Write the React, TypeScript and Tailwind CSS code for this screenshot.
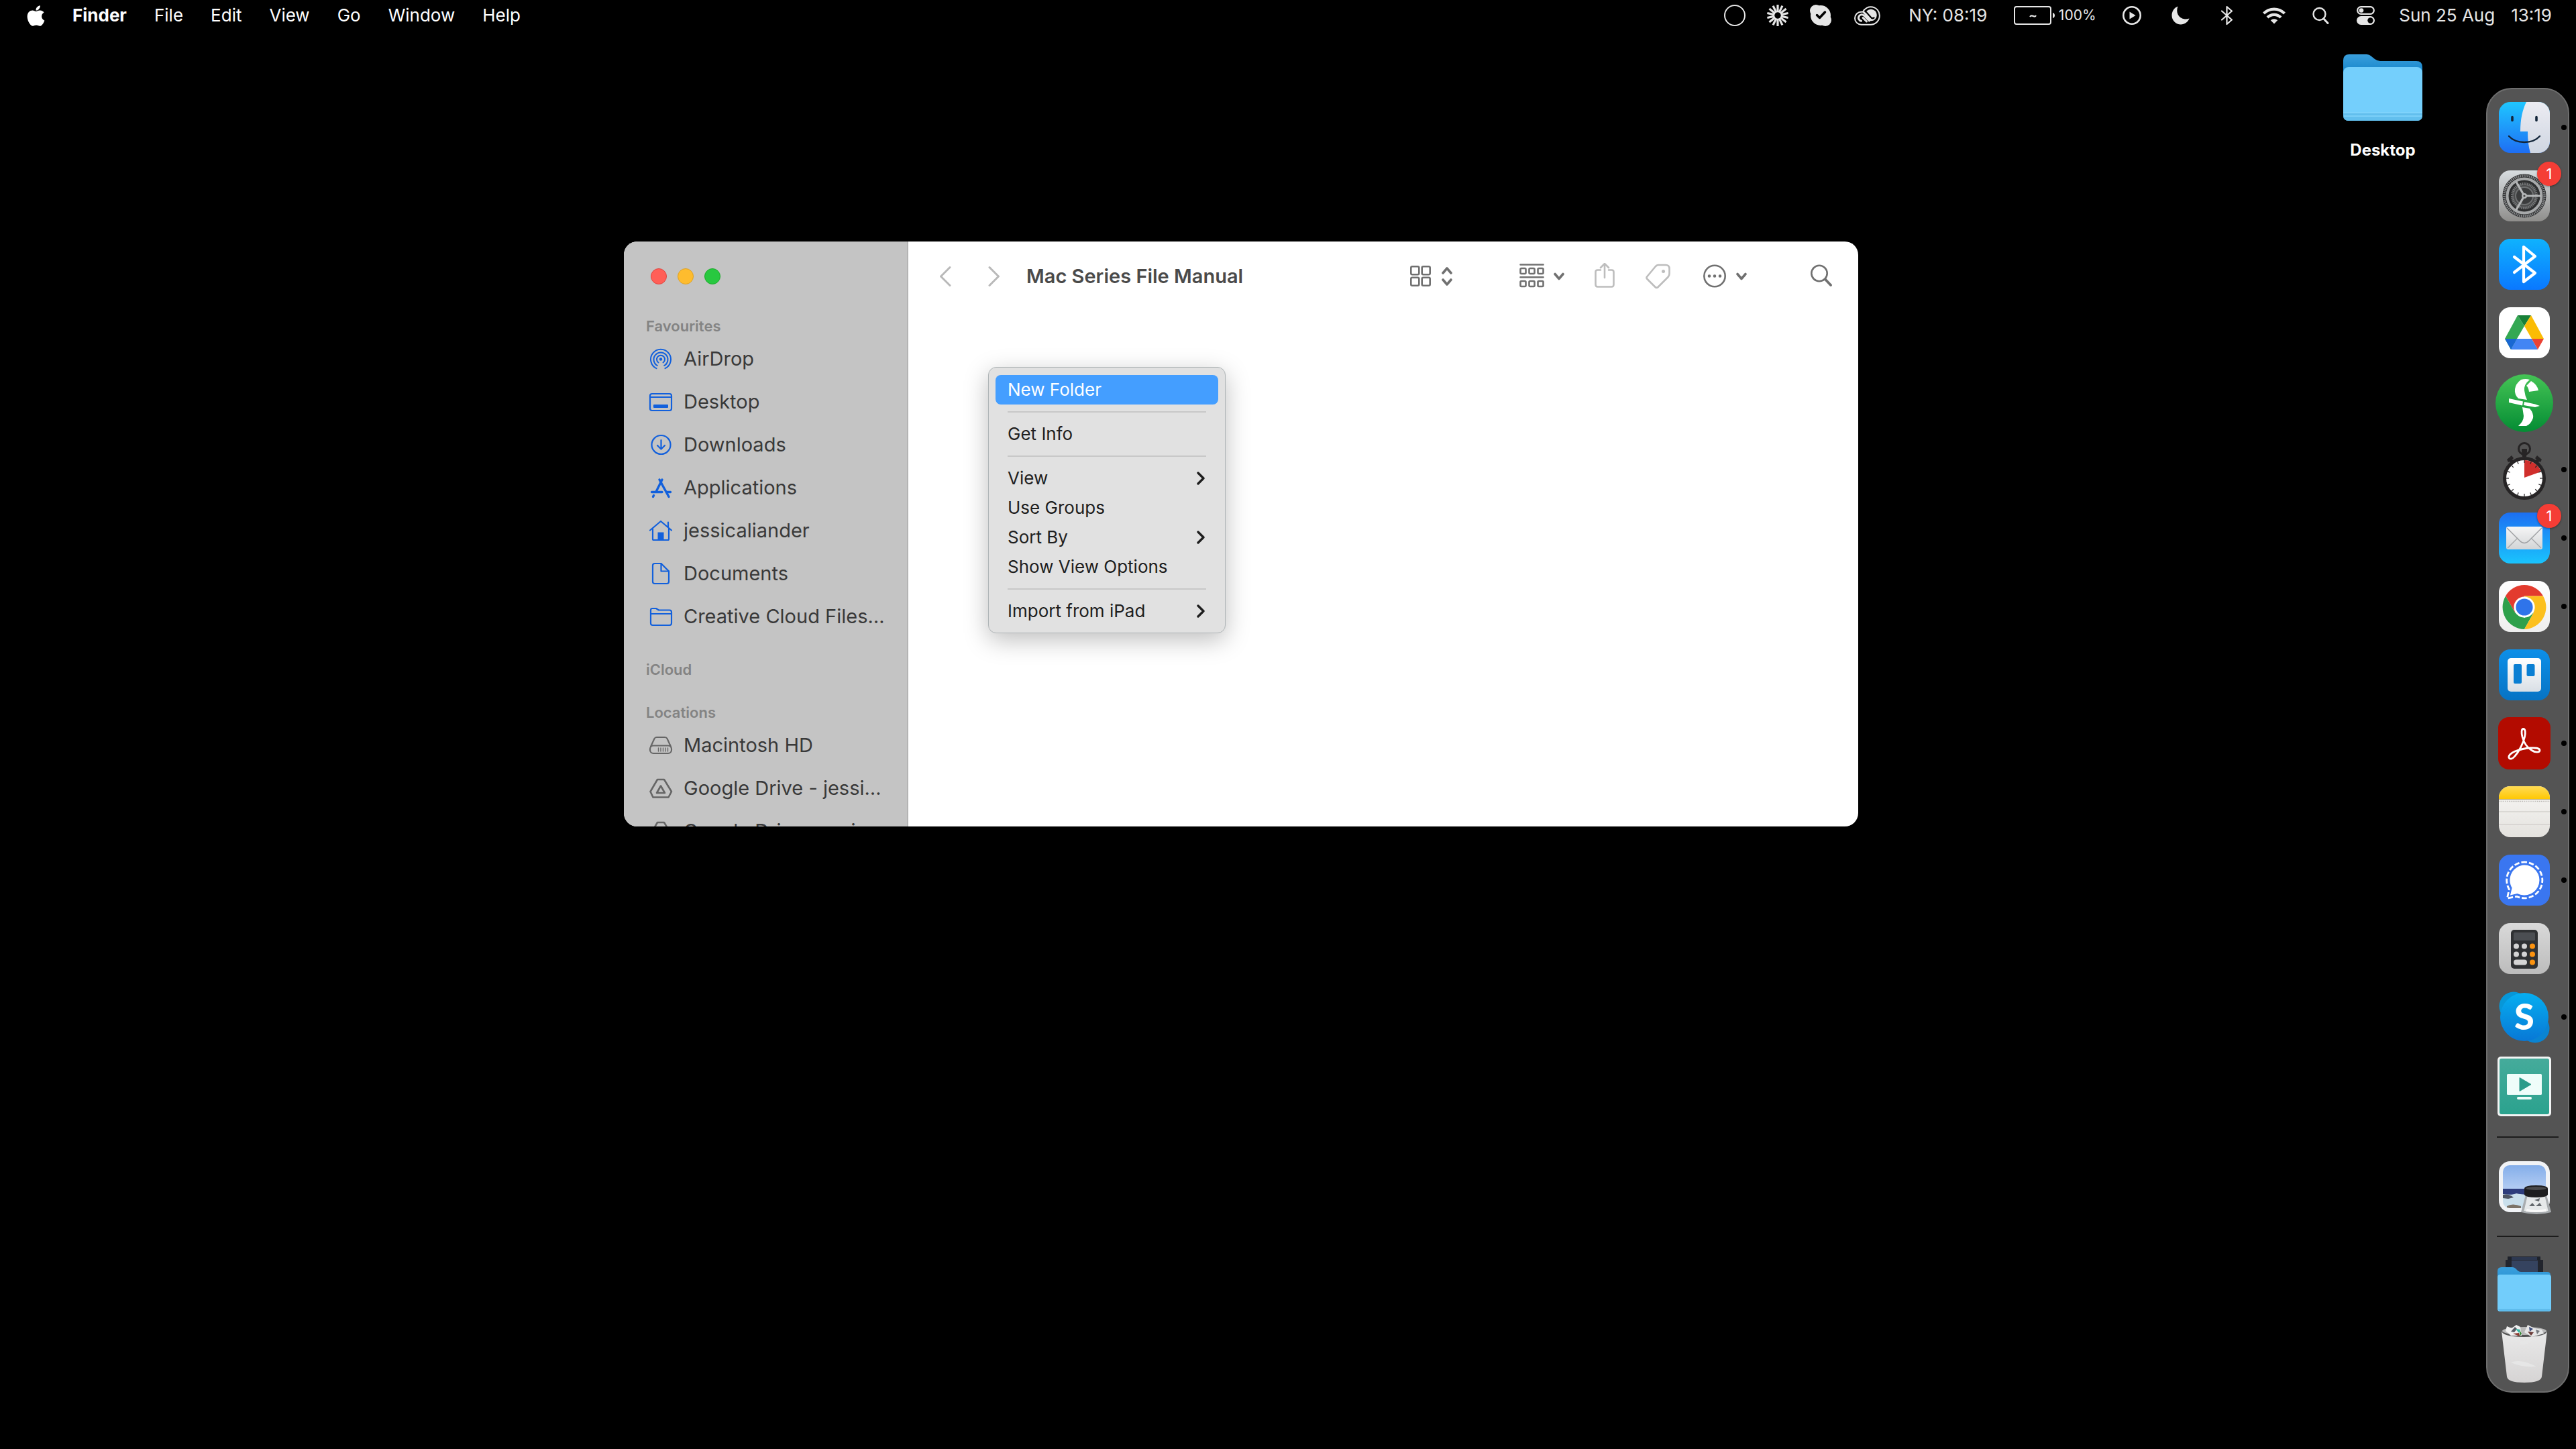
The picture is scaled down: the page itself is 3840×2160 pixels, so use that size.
import type { ReactNode } from "react";
import { FaApple } from "react-icons/fa";

/* ---------- Menu bar ---------- */

const menus = ["File", "Edit", "View", "Go", "Window", "Help"];

function StatusButton({ label, className, children }: { label: string; className: string; children: ReactNode }) {
  return (
    <button type="button" aria-label={label} className={`flex shrink-0 items-center ${className}`}>
      {children}
    </button>
  );
}

function MenuBar() {
  const rays = Array.from({ length: 14 }, (_, i) => (i * 360) / 14);
  return (
    <header className="flex h-[46px] shrink-0 items-center justify-between pl-[40px] pr-[36px] text-[26px] leading-[32px] text-white">
      <nav className="flex items-center gap-[41px]">
        <button type="button" aria-label="Apple menu">
          <FaApple className="h-[35px] w-[27px]" />
        </button>
        <button type="button" className="font-bold">Finder</button>
        {menus.map((m) => (
          <button type="button" key={m}>{m}</button>
        ))}
      </nav>
      <div className="flex items-center text-[#e6e6e6]">
        <StatusButton label="Recorder" className="">
          <svg width="32" height="32" viewBox="0 0 32 32" fill="none" stroke="currentColor" strokeWidth="2"><circle cx="16" cy="16" r="15" /></svg>
        </StatusButton>
        <StatusButton label="Loader" className="ml-[32px]">
          <svg width="32" height="32" viewBox="0 0 32 32" stroke="currentColor">
            {rays.map((a) => (
              <line key={a} x1="16" y1="0" x2="16" y2="11" strokeWidth="3.200" transform={`rotate(${a} 16 16)`} />
            ))}
            <circle cx="16" cy="16" r="5.800" fill="none" strokeWidth="2" />
          </svg>
        </StatusButton>
        <StatusButton label="Skype" className="ml-[32px]">
          <svg width="32" height="32" viewBox="0 0 32 32">
            <g fill="currentColor"><circle cx="9" cy="9" r="9" /><circle cx="23" cy="23" r="9" /><circle cx="16" cy="16" r="15" /></g>
            <path d="M10.500 15.500l4 4 8-8.500" fill="none" stroke="#000" strokeWidth="3.500" strokeLinecap="round" strokeLinejoin="round" />
          </svg>
        </StatusButton>
        <StatusButton label="Creative Cloud" className="ml-[34px]">
          <svg width="39" height="30" viewBox="0 0 39 30" fill="none" stroke="currentColor">
            <path d="M10.500 28.700a9.300 9.300 0 0 1 0-19h2.500A13 13 0 0 1 37.800 15 13.300 13.300 0 0 1 25 28.700z" strokeWidth="2" />
            <circle cx="25" cy="14.500" r="8.800" fill="currentColor" stroke="none" />
            <path d="M18.500 24L13 18.500M10.500 23.300a4.800 4.800 0 1 1 4-8.300l8 8" strokeWidth="3" strokeLinecap="round" />
            <path d="M17 9l8.500 9.500q2 1.500 4 0" stroke="#000" strokeWidth="2.200" strokeLinecap="round" />
            <path d="M14.500 10.500l9.500 10.500" strokeWidth="3" strokeLinecap="round" />
          </svg>
        </StatusButton>
        <span className="ml-[42px] w-[122px] whitespace-nowrap">NY: 08:19</span>
        <StatusButton label="Battery" className="ml-[35px] gap-1">
          <svg width="62" height="28" viewBox="0 0 62 28" fill="none" stroke="currentColor" strokeWidth="2">
            <rect x="1" y="1" width="54" height="26" rx="3" />
            <path d="M24 16c1.500-2.500 3-2 5-1s3 1 4-1" />
            <path d="M58 10c4 1 4 7 0 8z" fill="currentColor" stroke="none" />
          </svg>
          <span className="w-[57px] whitespace-nowrap text-[21px] leading-[28px]">100%</span>
        </StatusButton>
        <StatusButton label="Now playing" className="ml-[39px]">
          <svg width="28" height="28" viewBox="0 0 28 28"><circle cx="14" cy="14" r="12.700" fill="none" stroke="currentColor" strokeWidth="2.600" /><path d="M10.500 8.500v11l9-5.500z" fill="currentColor" /></svg>
        </StatusButton>
        <StatusButton label="Focus" className="ml-[45px]">
          <svg width="27" height="28" viewBox="0 0 27 28" fill="currentColor"><path d="M9.500.5C6 9 10 18.500 20 19.500c2.500.2 4.500-.2 6.500-1C24.500 24 19.500 27.500 14 27.500 6.500 27.500.5 21.500.5 14 .5 8 4 2.500 9.500.5z" /></svg>
        </StatusButton>
        <StatusButton label="Bluetooth" className="ml-[46px]">
          <svg width="19" height="30" viewBox="0 0 19 30" fill="none" stroke="currentColor" strokeWidth="2.200" strokeLinejoin="round" strokeLinecap="round"><path d="M2 8.500l15 13-7.500 6.500V2L17 8.500 2 21.500" /></svg>
        </StatusButton>
        <StatusButton label="Wi-Fi" className="ml-[44px]">
          <svg width="34" height="26" viewBox="0 0 34 26" fill="none" stroke="currentColor" strokeWidth="4.200">
            <path d="M1.500 10a22 22 0 0 1 31 0" /><path d="M7 16a14.200 14.200 0 0 1 20 0" />
            <path d="M17 25.500l-5.200-5.200a7.400 7.400 0 0 1 10.400 0z" fill="currentColor" stroke="none" />
          </svg>
        </StatusButton>
        <StatusButton label="Search" className="ml-[40px]">
          <svg width="25" height="26" viewBox="0 0 25 26" fill="none" stroke="currentColor" strokeWidth="2.400" strokeLinecap="round"><circle cx="10.500" cy="11" r="9" /><path d="M17 18l6 6.500" strokeWidth="3" /></svg>
        </StatusButton>
        <StatusButton label="Control Centre" className="ml-[41px]">
          <svg width="27" height="28" viewBox="0 0 27 28">
            <rect x="1.200" y="1.200" width="24.600" height="10.600" rx="5.300" fill="none" stroke="currentColor" strokeWidth="2.200" />
            <circle cx="7" cy="6.500" r="3.300" fill="currentColor" />
            <rect x="0" y="15" width="27" height="13" rx="6.500" fill="currentColor" />
            <circle cx="20.500" cy="21.500" r="4.200" fill="#000" />
          </svg>
        </StatusButton>
        <button type="button" className="ml-[36px] flex gap-[24px] whitespace-nowrap">
          <span>Sun 25 Aug</span>
          <span>13:19</span>
        </button>
      </div>
    </header>
  );
}

/* ---------- Finder sidebar ---------- */

type Item = { name: string; icon: ReactNode };

const driveOutline = (
  <g strokeWidth="2.600">
    <path d="M13 5h10l11 18-4.500 8.500h-23L2.500 23z" />
    <path d="M18 14.500L24 25H12z" />
  </g>
);

const favourites: Item[] = [
  {
    name: "AirDrop",
    icon: (
      <g strokeWidth="2">
        <circle cx="18" cy="18.500" r="2.200" fill="currentColor" stroke="none" />
        <path d="M14.500 23.500a6 6 0 1 1 7 0" />
        <path d="M12.800 28a10.500 10.500 0 1 1 10.400 0" />
        <path d="M11.500 32.200a15 15 0 1 1 13 0" />
      </g>
    ),
  },
  {
    name: "Desktop",
    icon: (
      <g>
        <rect x="2" y="6" width="32" height="25" rx="3" />
        <path d="M2 11h32" />
        <rect x="7" y="22" width="22" height="5" rx="1" fill="currentColor" stroke="none" />
      </g>
    ),
  },
  { name: "Downloads", icon: <g><circle cx="18.500" cy="18" r="14" /><path d="M18.500 11v13M13 19l5.500 5.500L24 19" /></g> },
  {
    name: "Applications",
    icon: (
      <g strokeWidth="3.400">
        <path d="M20 6l-8.500 17M16 6l14 25.500M4.500 24.500H20M26 24.500h6.500M7.500 29.500L6.500 31.500" />
      </g>
    ),
  },
  {
    name: "jessicaliander",
    icon: (
      <g>
        <path d="M2 17.500L18 4l16 13.500M29 13V5.500" />
        <path d="M6 15v15.500q0 1.500 1.500 1.500h21q1.500 0 1.500-1.500V15" />
        <rect x="13.500" y="20.500" width="9" height="12" fill="currentColor" stroke="none" />
      </g>
    ),
  },
  { name: "Documents", icon: <g><path d="M9 3h9.500L30 14.500V30q0 3-3 3H9q-3 0-3-3V6q0-3 3-3z" /><path d="M18.500 3v11.500H30" /></g> },
  { name: "Creative Cloud Files…", icon: <g><path d="M3 27V8.500Q3 6 5.500 6H11l4 2.500h16q3 0 3 3V28q0 3-3 3H6q-3 0-3-3z" /><path d="M3 14h31" /></g> },
];

const locations: Item[] = [
  {
    name: "Macintosh HD",
    icon: (
      <g>
        <path d="M3 20L8.500 8Q9.500 6 12 6h12q2.500 0 3.500 2L33 20" />
        <rect x="2" y="18.500" width="32" height="11.500" rx="5" />
        <path d="M14.500 22v5M18 22v5M21.500 22v5M25 22v5M28.500 22v5" strokeWidth="1.400" />
      </g>
    ),
  },
  { name: "Google Drive - jessi…", icon: driveOutline },
  { name: "Google Drive - mai…", icon: driveOutline },
];

function Section({ title, items, tone }: { title: string; items: Item[]; tone: string }) {
  return (
    <section>
      <h2 className="pl-[33px] text-[22px] font-semibold leading-[34px] text-[#838383]">{title}</h2>
      <ul>
        {items.map((it) => (
          <li key={it.name}>
            <button type="button" className="flex h-[64px] w-full items-center gap-4 pl-[37px]">
              <svg width="36" height="36" viewBox="0 0 36 36" fill="none" stroke="currentColor" strokeWidth="2.200" strokeLinecap="round" strokeLinejoin="round" className={`shrink-0 ${tone}`}>
                {it.icon}
              </svg>
              <span className="whitespace-nowrap">{it.name}</span>
            </button>
          </li>
        ))}
      </ul>
    </section>
  );
}

function Sidebar() {
  return (
    <aside className="flex w-[424px] shrink-0 flex-col overflow-hidden border-r-2 border-[#b4b4b4] bg-[#c4c4c4] text-[29px] leading-[40px] text-[#393939]">
      <div className="flex h-[104px] shrink-0 items-center gap-4 pl-[40px]">
        <button type="button" aria-label="Close" className="size-6 rounded-full border border-[#e0443e] bg-[#ff5f57]" />
        <button type="button" aria-label="Minimise" className="size-6 rounded-full border border-[#dea123] bg-[#febc2e]" />
        <button type="button" aria-label="Zoom" className="size-6 rounded-full border border-[#1aab29] bg-[#28c840]" />
      </div>
      <div className="flex min-h-0 flex-1 flex-col gap-[30px] pt-[5px]">
        <Section title="Favourites" items={favourites} tone="text-[#1260dc]" />
        <Section title="iCloud" items={[]} tone="text-[#1260dc]" />
        <Section title="Locations" items={locations} tone="text-[#666666]" />
      </div>
    </aside>
  );
}

/* ---------- Finder toolbar ---------- */

function Glyph({ w, children, className = "", sw = 2.6 }: { w: number; children: ReactNode; className?: string; sw?: number }) {
  return (
    <svg width={w} height="40" viewBox={`0 0 ${w} 40`} fill="none" stroke="currentColor" strokeWidth={sw} strokeLinecap="round" strokeLinejoin="round" className={className}>
      {children}
    </svg>
  );
}

function DownChevron() {
  return <Glyph w={16} sw={3.6}><path d="M2 16.500l6 7 6-7" /></Glyph>;
}

function Toolbar() {
  return (
    <div className="flex h-[104px] shrink-0 items-center justify-between pl-[46px] pr-[39px] text-[#707070]">
      <div className="flex items-center">
        <button type="button" aria-label="Back" className="text-[#b9b9b9]"><Glyph w={18} sw={3}><path d="M16 6.500L2.500 20 16 33.500" /></Glyph></button>
        <button type="button" aria-label="Forward" className="ml-[55px] text-[#b9b9b9]"><Glyph w={18} sw={3}><path d="M2 6.500L15.500 20 2 33.500" /></Glyph></button>
        <h1 className="ml-[39px] text-[29px] font-semibold leading-[40px] text-[#4a4a4a]">Mac Series File Manual</h1>
      </div>
      <div className="flex items-center">
        <button type="button" aria-label="View as icons" className="flex gap-4">
          <Glyph w={31}>
            <rect x="1.300" y="5.300" width="12" height="12" rx="2" /><rect x="17.700" y="5.300" width="12" height="12" rx="2" />
            <rect x="1.300" y="21.700" width="12" height="12" rx="2" /><rect x="17.700" y="21.700" width="12" height="12" rx="2" />
          </Glyph>
          <Glyph w={16} sw={3.6}><path d="M2 15l6-7 6 7M2 25l6 7 6-7" /></Glyph>
        </button>
        <button type="button" aria-label="Group items" className="ml-[100px] flex gap-[14px]">
          <Glyph w={37}>
            <path d="M1.500 2.500h34M1.500 21.300h34" />
            <rect x="1.500" y="8" width="8" height="8" rx="1.500" /><rect x="14.500" y="8" width="8" height="8" rx="1.500" /><rect x="27.500" y="8" width="8" height="8" rx="1.500" />
            <rect x="1.500" y="27" width="8" height="8" rx="1.500" /><rect x="14.500" y="27" width="8" height="8" rx="1.500" /><rect x="27.500" y="27" width="8" height="8" rx="1.500" />
          </Glyph>
          <DownChevron />
        </button>
        <button type="button" aria-label="Share" className="ml-[45px] text-[#bdbdbd]">
          <Glyph w={30}><path d="M9 10.500H4.500q-3 0-3 3V32q0 3.500 3 3.500h21q3 0 3-3.500V13.500q0-3-3-3H21M15 22V1M9 7l6-6 6 6" /></Glyph>
        </button>
        <button type="button" aria-label="Tags" className="ml-[46px] text-[#bdbdbd]">
          <Glyph w={37}><path d="M19 3h11q5.500 0 5.500 5.500v7.500q0 3-2 5L18.500 36q-2 2-4.500-.5L2.500 24q-2-2 0-4L15 5q2-2 4-2z" /><circle cx="26.500" cy="12.500" r="2.500" fill="currentColor" stroke="none" /></Glyph>
        </button>
        <button type="button" aria-label="More actions" className="ml-[49px] flex gap-[15px]">
          <Glyph w={34}>
            <circle cx="17" cy="19.500" r="15.700" />
            <g fill="currentColor" stroke="none"><circle cx="9" cy="19.500" r="2.300" /><circle cx="17" cy="19.500" r="2.300" /><circle cx="25" cy="19.500" r="2.300" /></g>
          </Glyph>
          <DownChevron />
        </button>
        <button type="button" aria-label="Search" className="ml-[95px]">
          <Glyph w={32}><circle cx="13" cy="15.500" r="11.700" /><path d="M22 24.500l8 8.500" strokeWidth="3.800" /></Glyph>
        </button>
      </div>
    </div>
  );
}

/* ---------- Context menu ---------- */

type Entry = { label: string; sub?: boolean; active?: boolean };
const groups: Entry[][] = [
  [{ label: "New Folder", active: true }],
  [{ label: "Get Info" }],
  [{ label: "View", sub: true }, { label: "Use Groups" }, { label: "Sort By", sub: true }, { label: "Show View Options" }],
  [{ label: "Import from iPad", sub: true }],
];

function ContextMenu() {
  return (
    <div role="menu" className="absolute left-[543px] top-[187px] w-[354px] rounded-[12px] border border-[#aeb4b6] bg-[#e1e1e1] px-[10px] pb-[10px] pt-[11px] text-[26px] leading-[32px] text-[#1e1e1e] shadow-[0_10px_36px_rgba(0,0,0,0.26)]">
      {groups.map((g, i) => (
        <div key={g[0].label} role="group">
          {i > 0 && <hr className="mx-[18px] my-[10px] border-t-2 border-[#c8c8c8]" />}
          {g.map((e) => (
            <button
              type="button"
              role="menuitem"
              key={e.label}
              className={`flex h-[44px] w-full items-center justify-between rounded-[8px] pl-[18px] pr-[20px] ${e.active ? "bg-[#449eff] text-white" : ""}`}
            >
              <span>{e.label}</span>
              {e.sub && (
                <svg width="12" height="20" viewBox="0 0 12 20" fill="none" stroke="currentColor" strokeWidth="3.400" strokeLinecap="round" strokeLinejoin="round"><path d="M2 2l8 8-8 8" /></svg>
              )}
            </button>
          ))}
        </div>
      ))}
    </div>
  );
}

/* ---------- Dock ---------- */

function Tile({ fill }: { fill: string }) {
  return <rect x="12" y="12" width="76" height="76" rx="17" fill={fill} />;
}

function Gradients() {
  const defs: [string, string, string][] = [
    ["gFinder", "#1fc6ff", "#1e6ef4"],
    ["gFace", "#ececf2", "#cfd6e2"],
    ["gSettings", "#d8dde0", "#8f8e8c"],
    ["gBlue", "#0fb2fe", "#0a78ff"],
    ["gGreen", "#45c455", "#048c34"],
    ["gMail", "#1d6ff2", "#1ac4fd"],
    ["gEnvelope", "#f6f6f6", "#d2d4d6"],
    ["gChrome", "#ffffff", "#eeeeee"],
    ["gTrello", "#0d8fe8", "#0673c4"],
    ["gBoard", "#ffffff", "#d9dfe5"],
    ["gYellow", "#ffdb56", "#ffc803"],
    ["gPaper", "#f8f7f5", "#e4e2de"],
    ["gCalc", "#d9d9d9", "#bcbcbc"],
    ["gSkype", "#06aef0", "#0878d6"],
    ["gTeal", "#45ab9b", "#2ba28e"],
    ["gSky", "#84aeea", "#b4cdf3"],
    ["gBack", "#3a9fdc", "#067ac4"],
    ["gBin", "#e9e9e9", "#d6d4d4"],
  ];
  return (
    <svg width="0" height="0" className="absolute" aria-hidden="true">
      <defs>
        {defs.map(([id, a, b]) => (
          <linearGradient key={id} id={id} x1="0" y1="0" x2="0" y2="1">
            <stop offset="0" stopColor={a} /><stop offset="1" stopColor={b} />
          </linearGradient>
        ))}
        <clipPath id="cTile"><rect x="12" y="12" width="76" height="76" rx="17" /></clipPath>
        <clipPath id="cPhoto"><rect x="18" y="16" width="64" height="64" rx="10" /></clipPath>
      </defs>
    </svg>
  );
}

type DockApp = { name: string; art: ReactNode; open?: boolean; badge?: string };

const ticks = Array.from({ length: 16 }, (_, i) => (i * 360) / 16);

const apps: DockApp[] = [
  {
    name: "Finder", open: true,
    art: (
      <g>
        <Tile fill="url(#gFinder)" />
        <path clipPath="url(#cTile)" d="M53 12C47 24 44 38 44 56h11c0 12 1 22 4 32h31V12z" fill="url(#gFace)" />
        <path d="M32 34.500v5M68 34.500v5" stroke="#13263a" strokeWidth="3.600" strokeLinecap="round" />
        <path d="M27 63c11 12 35 12 46 0" fill="none" stroke="#13263a" strokeWidth="2.400" strokeLinecap="round" />
      </g>
    ),
  },
  {
    name: "System Settings", badge: "1",
    art: (
      <g>
        <Tile fill="url(#gSettings)" />
        <circle cx="50" cy="50" r="32.500" fill="#2e2f30" />
        <circle cx="50" cy="50" r="30" fill="none" stroke="#8a8c8e" strokeWidth="3.500" strokeDasharray="1.600 1.200" />
        <circle cx="50" cy="50" r="25.500" fill="none" stroke="#a7a9aa" strokeWidth="4" />
        <circle cx="50" cy="50" r="18" fill="#4c4d4e" stroke="#77797a" strokeWidth="4" strokeDasharray="1.600 1" />
        <circle cx="50" cy="50" r="13" fill="#3b3c3d" stroke="#6f7172" strokeWidth="2" />
        <path d="M50 50h25M50 50L37.500 28.500M50 50L37.500 71.500" stroke="#b4b6b7" strokeWidth="3.200" />
        <circle cx="50" cy="50" r="4" fill="#b4b6b7" /><circle cx="50" cy="50" r="1.600" fill="#444" />
      </g>
    ),
  },
  {
    name: "Bluetooth File Exchange",
    art: <g><Tile fill="url(#gBlue)" /><path d="M35 39l31 24-17 13V24l17 14-31 24" fill="none" stroke="#fff" strokeWidth="4.200" strokeLinecap="round" strokeLinejoin="round" /></g>,
  },
  {
    name: "Google Drive",
    art: (
      <g>
        <Tile fill="#fff" />
        <path d="M40 24L50 40 39 59 30 75 21 59z" fill="#34a853" />
        <path d="M40 24h20L50 40z" fill="#188038" />
        <path d="M60 24l19 35H61L50 40z" fill="#fbbc04" />
        <path d="M39 59h22l9 16H30z" fill="#4285f4" />
        <path d="M21 59h18l-9 16z" fill="#1967d2" />
        <path d="M61 59h18l-9 16z" fill="#ea4335" />
      </g>
    ),
  },
  {
    name: "Final Draft",
    art: (
      <g>
        <circle cx="50" cy="53" r="43" fill="url(#gGreen)" />
        <g fill="#fff">
          <path d="M45 18q7-2 13 0-9 7-8 16 1 8 4 14l-13-2q-6-6-5-14 1-8 9-14z" />
          <path d="M60 20q9 5 11 14l-14 2q-1-7-4-9z" />
          <path d="M27 46l21 4.500-1 6-20-4.500zM50 51l16 3.500 7 2.500-7 2-17-3z" />
          <path d="M47 59l11 2q6 7 5 14-3 9-10 12H41q8-7 8-15-1-7-2-13z" />
        </g>
      </g>
    ),
  },
  {
    name: "Timer", open: true,
    art: (
      <g>
        <circle cx="50" cy="19" r="8.500" fill="none" stroke="#262425" strokeWidth="3" />
        <path d="M46 19h8v4l-1 8h-6l-1-8z" fill="#262425" />
        <path d="M24 35l7-6 3 4-2 2 5 6-4 3-5-6-2 1zM76 35l-7-6-3 4 2 2-5 6 4 3 5-6 2 1z" fill="#262425" />
        <circle cx="50" cy="63" r="29.500" fill="#fff" stroke="#262425" strokeWidth="5" />
        <path d="M50 62V36a27 27 0 0 1 25 17z" fill="#d02f2c" />
        {ticks.map((a) => (
          <path key={a} d="M50 36v4" stroke="#262425" strokeWidth="1.200" transform={`rotate(${a} 50 63)`} />
        ))}
      </g>
    ),
  },
  {
    name: "Mail", open: true, badge: "1",
    art: (
      <g>
        <Tile fill="url(#gMail)" />
        <rect x="23" y="33" width="54" height="34" rx="3" fill="url(#gEnvelope)" />
        <path d="M25 65l15-15M75 65L60 50" stroke="#a3a5a7" strokeWidth="1.200" />
        <path d="M24 35l19 19q7 7 14 0l19-19" fill="none" stroke="#9b9da0" strokeWidth="1.400" />
      </g>
    ),
  },
  {
    name: "Google Chrome", open: true,
    art: (
      <g>
        <Tile fill="url(#gChrome)" />
        <path d="M50 18a33 33 0 0 1 28 16.500H50L36 59 22 34.500A33 33 0 0 1 50 18z" fill="#e33b2e" />
        <path d="M22 34.500L36 59 50 67 64 59 50 84A33 33 0 0 1 22 34.500z" fill="#2da04b" />
        <path d="M78 34.500A33 33 0 0 1 50 84l14-25-14-8V34.500z" fill="#fcc01e" />
        <circle cx="50" cy="51" r="15.600" fill="#fff" />
        <circle cx="50" cy="51" r="12.600" fill="#2f74ea" />
      </g>
    ),
  },
  {
    name: "Trello",
    art: (
      <g>
        <Tile fill="url(#gTrello)" />
        <rect x="25" y="25" width="50" height="50" rx="5" fill="url(#gBoard)" />
        <rect x="34" y="34" width="12" height="29" rx="2" fill="#0a7fd3" />
        <rect x="53.500" y="34" width="12" height="18" rx="2" fill="#0a7fd3" />
      </g>
    ),
  },
  {
    name: "Adobe Acrobat", open: true,
    art: (
      <g>
        <rect x="11" y="11" width="78" height="78" rx="16" fill="#b30b00" />
        <path d="M36 69c-4 5-8 5-9 2.500-1-3 3-7 9-9.500 7-2.500 14-4.500 22-5 8-.5 15 0 15 3.500s-7 3.500-12 0c-7-4-11.500-11-14-20-1.500-6-1.500-12 1.500-12s3.500 6 2 12c-2 9-8 21-14.500 28.500z" fill="none" stroke="#fff" strokeWidth="2.800" strokeLinejoin="round" />
      </g>
    ),
  },
  {
    name: "Notes", open: true,
    art: (
      <g clipPath="url(#cTile)">
        <rect x="12" y="12" width="76" height="76" fill="url(#gPaper)" />
        <rect x="12" y="12" width="76" height="19" fill="url(#gYellow)" />
        <path d="M12 31.500h76" stroke="#b9a97a" strokeWidth="1" />
        <path d="M13 34.500h75" stroke="#b5b3af" strokeWidth="1.600" strokeDasharray="1.400 1.400" />
        <path d="M12 50h76M12 69h76" stroke="#d3d1cd" strokeWidth="1.600" />
      </g>
    ),
  },
  {
    name: "Signal", open: true,
    art: (
      <g>
        <Tile fill="#3a76f0" />
        <path d="M50 27.500a22.500 22.500 0 1 1-10.500 42.400L29 72.500l2.600-11A22.500 22.500 0 0 1 50 27.500z" fill="#fff" />
        <path d="M50 23.200a26.800 26.800 0 1 1-11 51.200L24.500 77l2.800-13.500A26.800 26.800 0 0 1 50 23.200z" fill="none" stroke="#fff" strokeWidth="2.800" strokeDasharray="7.500 3" strokeDashoffset="3.500" />
      </g>
    ),
  },
  {
    name: "Calculator",
    art: (
      <g>
        <Tile fill="url(#gCalc)" />
        <rect x="30" y="22" width="40" height="58" rx="5" fill="#2f3133" />
        <rect x="34" y="26" width="32" height="12" rx="1.500" fill="#4b4e52" />
        <g fill="#d4d4d4"><circle cx="38" cy="46.500" r="4" /><circle cx="50" cy="46.500" r="4" /><circle cx="38" cy="58.500" r="4" /><circle cx="50" cy="58.500" r="4" /><rect x="34" y="66.500" width="20" height="8" rx="4" /></g>
        <g fill="#fb9310"><circle cx="62" cy="46.500" r="4" /><circle cx="62" cy="58.500" r="4" /><circle cx="62" cy="70.500" r="4" /></g>
      </g>
    ),
  },
  {
    name: "Skype", open: true,
    art: (
      <g>
        <circle cx="34" cy="34" r="21.500" fill="#0797d8" /><circle cx="66" cy="67" r="21.500" fill="#0a84d2" />
        <circle cx="50" cy="50" r="36" fill="url(#gSkype)" />
        <text x="50" y="69" textAnchor="middle" fontFamily="Lato" fontWeight="900" fontSize="54" fill="#fff">S</text>
      </g>
    ),
  },
  {
    name: "Screen Player",
    art: (
      <g>
        <rect x="10" y="7" width="80" height="89" rx="5" fill="#f2f4f4" />
        <rect x="13" y="10" width="74" height="83" rx="3" fill="url(#gTeal)" />
        <rect x="24" y="33" width="52" height="31" rx="1.500" fill="#effdfa" />
        <rect x="39" y="67" width="22" height="4" rx="2" fill="#effdfa" />
        <path d="M43 38.500v20l17-10z" fill="#2b9c8a" stroke="#2b9c8a" strokeLinejoin="round" />
      </g>
    ),
  },
];

const preview: DockApp = {
  name: "Preview",
  art: (
    <g>
      <rect x="12" y="10" width="76" height="76" rx="17" fill="#f1f3f6" />
      <g clipPath="url(#cPhoto)">
        <rect x="18" y="16" width="64" height="36" fill="url(#gSky)" />
        <rect x="18" y="51" width="64" height="9" fill="#2d3c7c" />
        <path d="M18 59q14 2 20-1 10 3 44 1v22H18z" fill="#c9dfec" />
        <path d="M18 60q9-2 16 4l-8 2-8-1z" fill="#4e5564" />
        <path d="M24 77q8-5 21 0v4H24z" fill="#7c7368" />
      </g>
      <path d="M52 60h31l7 26q-21 6-45 0z" fill="#a9adb0" />
      <path d="M54.500 62h26l5 22q-18 4-36 0z" fill="#e6e9ea" />
      <path d="M54 81q14 4 28 0l1 4q-16 2-31 0z" fill="#fafafa" />
      <path d="M57 77l5-5 4 5zM67 77l6-5 3 5zM65 68l8-3-1 5z" fill="#63686c" />
      <path d="M50 51q0-5 17.500-5T85 51v9q-2 4-17.500 4T50 60z" fill="#1d1d1f" />
      <ellipse cx="67.500" cy="50.500" rx="15" ry="2.600" fill="#4a4a4c" />
    </g>
  ),
};

const stacks: DockApp[] = [
  {
    name: "Screenshots",
    art: (
      <g>
        <rect x="25" y="8" width="49" height="20" fill="#1e222b" /><rect x="31" y="9" width="38" height="10" fill="#2d3850" />
        <rect x="22" y="13" width="56" height="22" fill="#22252d" /><rect x="31" y="14" width="39" height="20" fill="#35435f" />
        <path d="M10 30q0-6 6-6h16q3 0 5 2l3 3q2 2 5 2h39q5 0 5 5v52H10z" fill="url(#gBack)" />
        <rect x="10" y="35" width="80" height="55" rx="4" fill="#72cdfb" />
        <path d="M11 86q1 4 4 4h70q3 0 4-4z" fill="#5fbcec" />
      </g>
    ),
  },
  {
    name: "Bin",
    art: (
      <g>
        <ellipse cx="50" cy="17" rx="33" ry="6" fill="#b9b9b9" />
        <path d="M22 17l2-7 7 3 7-5 6 3 2 13H30z" fill="#f1f1f1" />
        <path d="M50 19l5-11 10 5 11 2 3 6-18 5z" fill="#e6e6e6" />
        <path d="M30 18l6-7 3 3-4 5z" fill="#565b63" /><path d="M37 14l7 1-2 5z" fill="#36b8a5" /><path d="M33 21l9-1 1 5z" fill="#8d3c35" />
        <path d="M57 11l6 3-5 4z" fill="#3e4d7a" /><path d="M55 18l9 1-4 5z" fill="#6b3b37" /><path d="M67 15l6 2-4 5z" fill="#74777c" /><path d="M43 16l3 5-3 4z" fill="#3b8b3c" />
        <path d="M16 17q1 6 17 8t34 0q16-2 17-8l-8 68q-1 9-26 9T24 85z" fill="url(#gBin)" />
        <path d="M44 32q14-1 22-4-8 9-22 10zM30 64q14-6 38 6-20 2-38-6z" fill="#e6e6e6" />
      </g>
    ),
  },
];

function DockItem({ app }: { app: DockApp }) {
  return (
    <button type="button" aria-label={app.name} className="relative flex h-[102px] w-[100px] items-center">
      <svg width="100" height="100" viewBox="0 0 100 100">{app.art}</svg>
      {app.badge && (
        <span className="absolute left-[69px] top-0 flex size-9 items-center justify-center rounded-full bg-[#f53d35] text-[22px] leading-[28px] text-white shadow-[0_1px_3px_rgba(0,0,0,0.4)]">{app.badge}</span>
      )}
      {app.open && <span className="absolute left-[105px] top-[47px] size-2 rounded-full bg-black" />}
    </button>
  );
}

function Dock() {
  return (
    <nav aria-label="Dock" className="mr-[10px] flex w-[124px] flex-col rounded-[38px] border-2 border-[#6e6e6e] bg-[#545454] pb-[6px] pl-[5px] pt-[6px]">
      {apps.map((a) => <DockItem key={a.name} app={a} />)}
      <hr className="mb-6 ml-[9px] mr-[14px] mt-[25px] border-t-2 border-[#1c1c1c]" />
      <DockItem app={preview} />
      <hr className="mb-5 ml-[9px] mr-[14px] mt-5 border-t-2 border-[#1c1c1c]" />
      {stacks.map((a) => <DockItem key={a.name} app={a} />)}
    </nav>
  );
}

/* ---------- Desktop ---------- */

function DesktopFolder() {
  return (
    <a href="#desktop" className="absolute right-[218px] top-[33px] flex w-[140px] flex-col items-center text-[24px] font-bold leading-[30px] text-white">
      <svg width="118" height="102" viewBox="0 0 118 102">
        <path d="M0 11Q0 2 9 2h26q4 0 7 3l5 4q4 3 8 3h54q9 0 9 9v20H0z" fill="url(#gBack)" />
        <rect x="0" y="21" width="118" height="80" rx="8" fill="#74cffc" />
        <path d="M0 89h118v4q0 8-8 8H8q-8 0-8-8z" fill="#62bfee" />
        <path d="M0 89h118M1 94h116" stroke="#84d6fd" strokeWidth="1.400" />
      </svg>
      <span className="mt-[28px]">Desktop</span>
    </a>
  );
}

export default function App() {
  return (
    <div className="flex min-h-screen flex-col bg-black font-['Inter',sans-serif]">
      <Gradients />
      <MenuBar />
      <main className="relative flex flex-1 items-center justify-end">
        <DesktopFolder />
        <section aria-label="Mac Series File Manual" className="absolute bottom-[928px] left-[930px] right-[1070px] top-[314px]">
          <div className="flex h-full overflow-hidden rounded-[20px] bg-white">
            <Sidebar />
            <div className="flex min-w-0 flex-1 flex-col">
              <Toolbar />
            </div>
          </div>
          <ContextMenu />
        </section>
        <Dock />
      </main>
    </div>
  );
}
